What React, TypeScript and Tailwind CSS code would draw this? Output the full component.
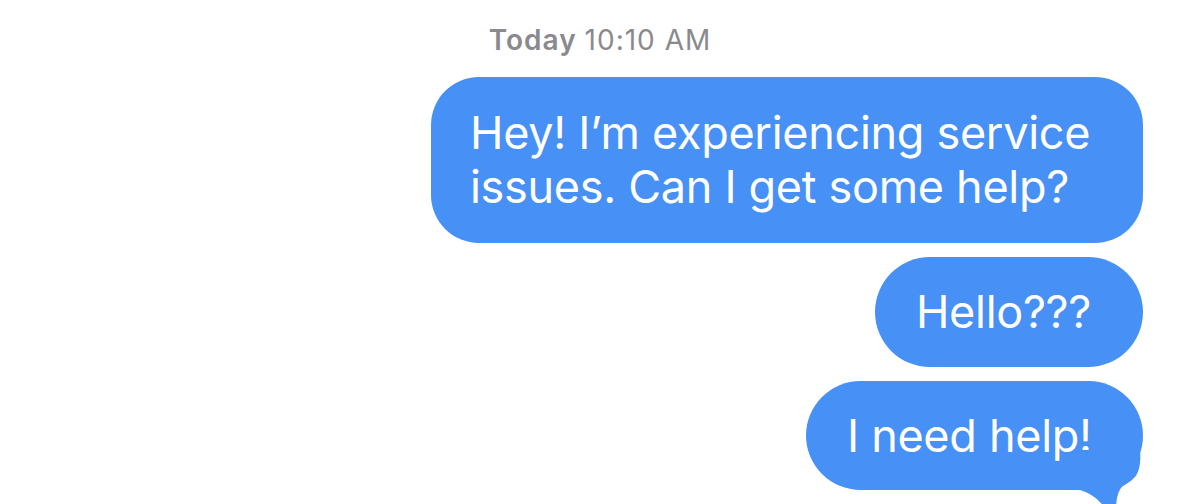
import React from 'react';

const font = { fontFamily: 'Inter, "Noto Sans", sans-serif' };

const Bubble = ({ children, className = '' }: { children: React.ReactNode; className?: string }) => (
  <div className={`relative bg-[#4690f6] text-white text-[45px] leading-[54px] tracking-[-0.3px] ${className}`}>
    {children}
  </div>
);

export default function App() {
  return (
    <div className="w-[1200px] h-[504px] overflow-hidden bg-white" style={font}>
      <div className="flex flex-col items-end pr-[57px]">
        {/* timestamp */}
        <div className="w-full flex justify-center pl-[57px] pt-[23px] h-[77px] text-[28px] leading-[34px] tracking-[1px] text-[#8a8a8e]">
          <span className="font-semibold mr-[8px]">Today</span>
          <span>10:10 AM</span>
        </div>

        <Bubble className="w-[712px] h-[166px] rounded-[48px] pl-[39px] pt-[29px]">
          Hey! I’m experiencing service
          <br />
          issues. Can I get some help?
        </Bubble>

        <Bubble className="mt-[14px] w-[268px] h-[110px] rounded-full flex items-center justify-center pr-[11px]">
          Hello???
        </Bubble>

        <Bubble className="mt-[14px] w-[337px] h-[109px] rounded-full flex items-center pl-[41px]">
          I need help!
          {/* tail */}
          <svg className="absolute right-0 top-[69px]" width="73" height="60" viewBox="0 0 73 60">
            <path d="M10 0 L70 0 C71 10 70 22 64 28 C60 32 56 34 53 36 C48 40 46 50 46 60 L36 60 C30 50 22 44 10 40 Z" fill="#4690f6" />
          </svg>
        </Bubble>
      </div>
    </div>
  );
}
